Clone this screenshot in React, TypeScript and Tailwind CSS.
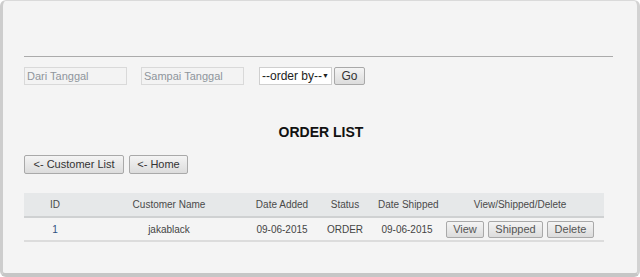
const font = "font-['Liberation_Sans',Arial,sans-serif]";

function GrayButton({ label, className = "" }: { label: string; className?: string }) {
  return (
    <button
      className={`h-full rounded-[2px] border border-[#a9a9a9] bg-gradient-to-b from-[#f4f4f4] to-[#dcdcdc] text-[#333] leading-none whitespace-nowrap ${className}`}
    >
      {label}
    </button>
  );
}

export default function App() {
  const cols = [
    { key: "id", label: "ID", w: "w-[62px]" },
    { key: "name", label: "Customer Name", w: "w-[166px]" },
    { key: "added", label: "Date Added", w: "w-[60px]" },
    { key: "status", label: "Status", w: "w-[66px]" },
    { key: "shipped", label: "Date Shipped", w: "w-[58px]" },
    { key: "act", label: "View/Shipped/Delete", w: "w-[168px]" },
  ];

  return (
    <div className="h-[277px] w-[640px] bg-white">
      <div
        className={`h-full w-full rounded-[6px] border-t border-r-[3px] border-b-[4px] border-l-[3px] border-t-[#dadada] border-r-[#d2d2d2] border-b-[#c6c6c6] border-l-[#cdcdcd] bg-[#f4f4f4] pl-[21px] pt-[55px] ${font}`}
      >
        <div className="h-px w-[589px] bg-[#ababab]" />

        <div className="mt-[10px] flex h-[18px] items-center text-[11px]">
          <input
            placeholder="Dari Tanggal"
            className="h-full w-[103px] border border-[#d9d9d9] bg-[#f3f3f3] px-[2px] text-[11px] placeholder:text-[#8f959c] outline-none"
          />
          <input
            placeholder="Sampai Tanggal"
            className="ml-[14px] h-full w-[103px] border border-[#d9d9d9] bg-[#f3f3f3] px-[2px] text-[11px] placeholder:text-[#8f959c] outline-none"
          />
          <div className="ml-[15px] flex h-full w-[73px] items-center justify-between border border-[#cfcfcf] bg-white pl-[2px] pr-[4px] text-[12px] text-[#222]">
            <span className="whitespace-nowrap">--order by--</span>
            <span className="text-[7px]">▼</span>
          </div>
          <GrayButton label="Go" className="ml-[2px] w-[31px] text-[12px]" />
        </div>

        <div className="mt-[40px] w-[594px] text-center text-[14px] font-bold leading-none text-[#111]">
          ORDER LIST
        </div>

        <div className="mt-[16px] flex h-[19px] gap-[5px] text-[11px]">
          <GrayButton label="<- Customer List" className="w-[100px] text-[11px]" />
          <GrayButton label="<- Home" className="w-[59px] text-[11px]" />
        </div>

        <table className="mt-[19px] w-[580px] table-fixed border-collapse text-[10px]">
          <thead>
            <tr className="h-[24px] border-b-2 border-[#cfd1d2] bg-[#e6e8e9] text-[#4a4a4a]">
              {cols.map((c) => (
                <th key={c.key} className={`${c.w} whitespace-nowrap font-normal`}>
                  {c.label}
                </th>
              ))}
            </tr>
          </thead>
          <tbody>
            <tr className="h-[24px] border-b-2 border-[#dcdcdc] text-center text-[10px] text-[#444]">
              <td className="text-[#2f4f7f]">1</td>
              <td>jakablack</td>
              <td className="whitespace-nowrap">09-06-2015</td>
              <td>ORDER</td>
              <td className="whitespace-nowrap">09-06-2015</td>
              <td>
                <div className="flex h-[17px] justify-center gap-[4px] text-[11px]">
                  <GrayButton label="View" className="w-[38px] !text-[#555]" />
                  <GrayButton label="Shipped" className="w-[55px] !text-[#555]" />
                  <GrayButton label="Delete" className="w-[47px] !text-[#555]" />
                </div>
              </td>
            </tr>
          </tbody>
        </table>
      </div>
    </div>
  );
}
